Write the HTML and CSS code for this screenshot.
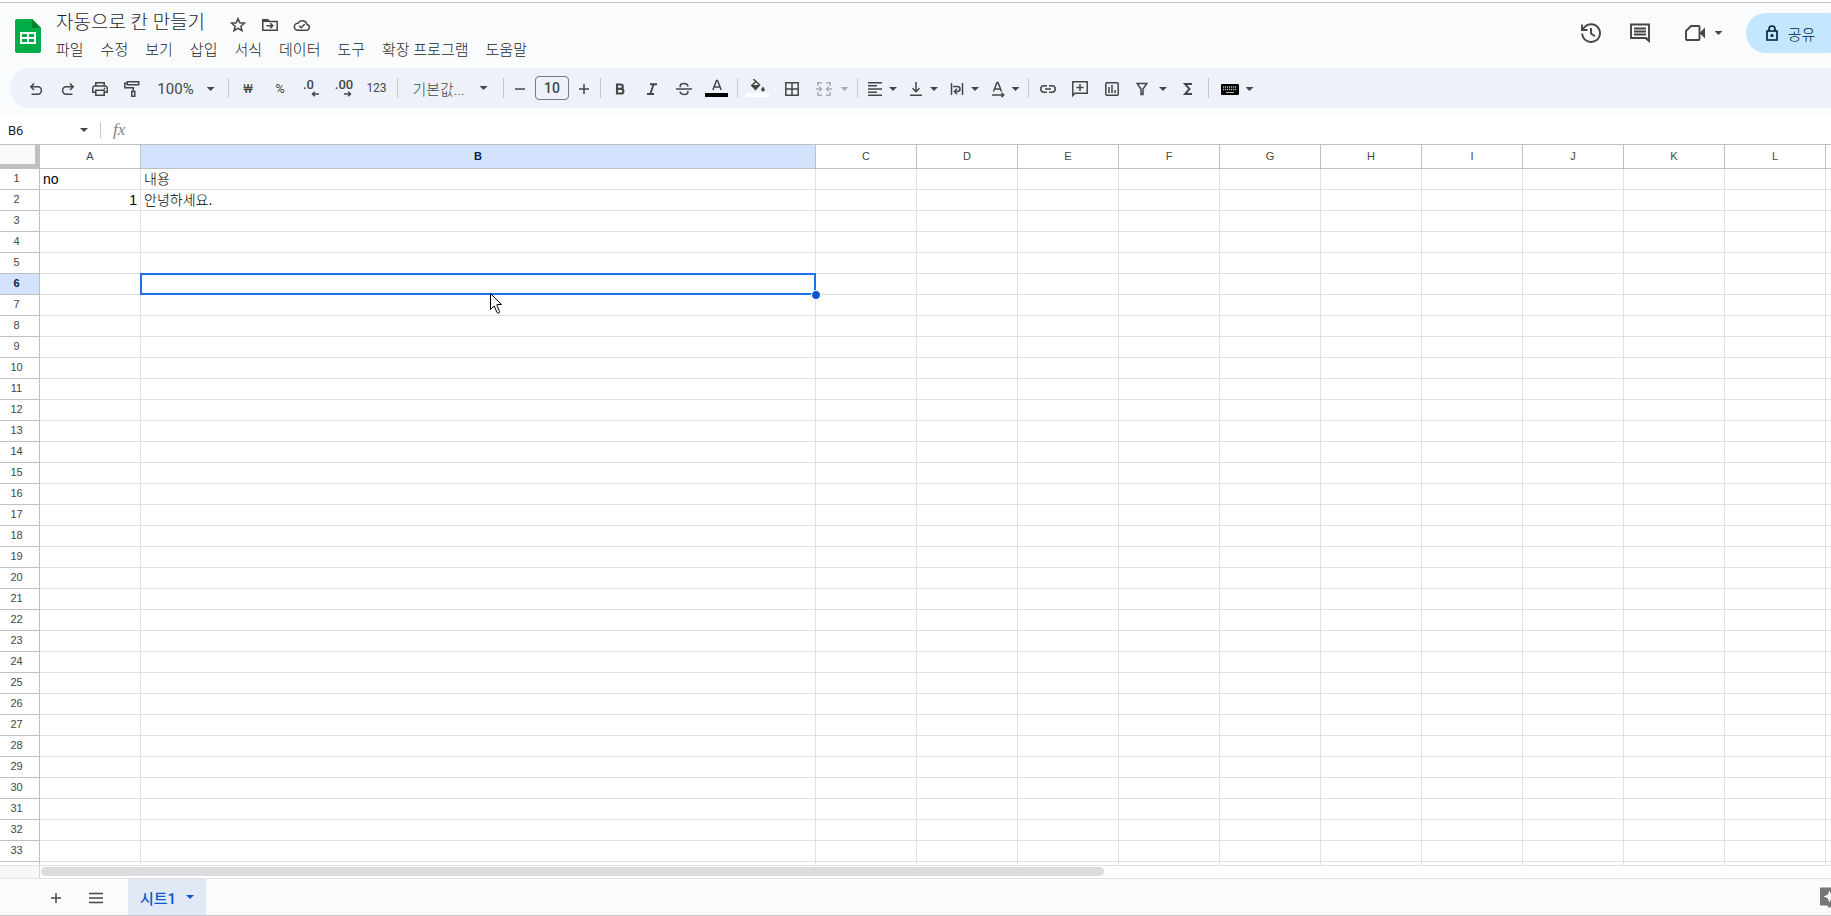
FILE: index.html
```html
<!DOCTYPE html>
<html lang="ko">
<head>
<meta charset="utf-8">
<title>자동으로 칸 만들기</title>
<link rel="stylesheet" href="styles.css">
</head>
<body>
<header class="header">
  <svg class="logo" viewBox="0 0 26 34" aria-hidden="true">
    <path fill="#00ac47" d="M2 0h15l9 9v23a2 2 0 0 1-2 2H2a2 2 0 0 1-2-2V2a2 2 0 0 1 2-2z"/>
    <path fill="#00832d" d="M17 0l9 9h-9z"/>
    <path fill="#fff" fill-rule="evenodd" d="M5 13h16v12H5zM7 15v3h5v-3zM14 15v3h5v-3zM7 20v3h5v-3zM14 20v3h5v-3z"/>
  </svg>
  <div class="doc">
    <div class="title-row">
      <h1 class="title">자동으로 칸 만들기</h1>
      <button class="doc-btn" aria-label="별표"><svg viewBox="0 0 18 18"><path class="s" d="M9 2.6l1.8 4.2 4.6.4-3.5 3 1.1 4.5L9 12.3l-4 2.4 1.1-4.5-3.5-3 4.6-.4z"/></svg></button>
      <button class="doc-btn" aria-label="이동"><svg viewBox="0 0 18 18"><path class="s" d="M1.8 14.2V3.8h5l1.6 1.7h7.8v8.7z"/><path class="f" d="M1.5 3.5h5l2 2.5h-7z"/><path class="s" d="M5.5 9.8h6M9.3 7.3l2.5 2.5-2.5 2.5"/></svg></button>
      <button class="doc-btn" aria-label="문서 상태"><svg viewBox="0 0 18 18"><path class="s" d="M4.8 14.3h9a2.9 2.9 0 0 0 .3-5.700A5 5 0 0 0 4.900 7.300a3.500 3.500 0 0 0-.1 7z"/><path class="s" d="M6.200 9.800l2 2 3.600-3.700"/></svg></button>
    </div>
    <nav class="menus">
      <button>파일</button><button>수정</button><button>보기</button><button>삽입</button><button>서식</button><button>데이터</button><button>도구</button><button>확장 프로그램</button><button>도움말</button>
    </nav>
  </div>
  <div class="actions">
    <button class="history" aria-label="기록"><svg viewBox="0 0 20 20"><path class="s2" d="M1.200 10.500a8.900 8.900 0 1 0 1.800-5.800L1.500 6.500M1 1.500v5.500h5.500"/><path class="s2" d="M10 5v5.600l4 2.600"/></svg></button>
    <button class="comments" aria-label="댓글"><svg viewBox="0 0 20 20"><path class="s2" d="M1 1.500h18v16l-3-2.500H1z"/><path class="f" d="M14 15h6v5z"/><path class="s2" d="M4 5.500h12M4 8.500h12M4 11.500h12"/></svg></button>
    <button class="meet" aria-label="화상 회의"><svg viewBox="0 0 20 20"><path class="s2" d="M6 3h7.500a1 1 0 0 1 1 1v12a1 1 0 0 1-1 1H2a1 1 0 0 1-1-1V8z"/><path class="f" d="M15 9.500L20 4.500v11l-5-5z"/></svg><i class="caret"></i></button>
    <button class="share"><svg viewBox="0 0 12 16"><path d="M1 6h10v9H1zM3 6V4a3 3 0 0 1 6 0v2" fill="none" stroke="#001d35" stroke-width="1.600"/><circle cx="6" cy="10.500" r="1.500" fill="#001d35"/></svg>공유</button>
  </div>
</header>

<div class="toolbar-wrap">
<div class="toolbar" role="toolbar">
  <button class="tool" aria-label="실행취소"><svg viewBox="0 0 18 18"><path class="s" d="M4.500 14.200h6.200a3.700 3.700 0 0 0 0-7.400H4M7 3.600L3.800 6.800 7 10"/></svg></button>
  <button class="tool" aria-label="재실행"><svg viewBox="0 0 18 18"><path class="s" d="M13.500 14.200H7.300a3.700 3.700 0 0 1 0-7.400H14M11 3.600l3.200 3.200L11 10"/></svg></button>
  <button class="tool" aria-label="인쇄"><svg viewBox="0 0 18 18"><path class="s" d="M4.800 5.500V2.800h8.400v2.700M4.500 12.300H1.800V8a2 2 0 0 1 2-2h10.400a2 2 0 0 1 2 2v4.300h-2.700M4.800 10.300h8.400v5H4.800z"/><circle class="f" cx="13.500" cy="8.300" r=".9"/></svg></button>
  <button class="tool" aria-label="서식 복사"><svg viewBox="0 0 18 18"><path class="s" d="M4.300 1.800h11.400v3H4.300zM4 3.300H1.800v4.500h8.500v3M8.800 11.500h3v4.700h-3z"/></svg></button>
  <button class="tool zoom">100%<i class="caret"></i></button>
  <span class="sep"></span>
  <button class="tool small">₩</button>
  <button class="tool small">%</button>
  <button class="tool dec less" aria-label="소수점 이하 자릿수 감소"><span>.0</span><svg viewBox="0 0 8 6"><path d="M8 3H1.500M3.800.7L1.500 3l2.300 2.300" fill="none" stroke="#444746" stroke-width="1.500"/></svg></button>
  <button class="tool dec" aria-label="소수점 이하 자릿수 증가"><span>.00</span><svg viewBox="0 0 8 6"><path d="M0 3h6.500M4.200.7L6.500 3 4.200 5.300" fill="none" stroke="#444746" stroke-width="1.500"/></svg></button>
  <button class="tool small num">123</button>
  <span class="sep"></span>
  <button class="tool font">기본값...<i class="caret"></i></button>
  <span class="sep"></span>
  <button class="tool step" aria-label="글꼴 크기 줄이기"><svg viewBox="0 0 18 18"><path class="s" d="M4 9h10"/></svg></button>
  <input class="size" aria-label="글꼴 크기" value="10">
  <button class="tool step plus" aria-label="글꼴 크기 늘리기"><svg viewBox="0 0 18 18"><path class="s" d="M4 9h10M9 4v10"/></svg></button>
  <span class="sep"></span>
  <button class="tool" aria-label="굵게"><svg viewBox="0 0 18 18"><path d="M6 4.500h3.600a2.200 2.200 0 0 1 0 4.400H6zM6 8.900h4.100a2.300 2.300 0 0 1 0 4.600H6z" fill="none" stroke="#444746" stroke-width="2.100"/></svg></button>
  <button class="tool" aria-label="기울임꼴"><svg viewBox="0 0 18 18"><path class="s2" d="M7 4.200h7M4 14h7M10.700 4L7.300 14"/></svg></button>
  <button class="tool" aria-label="취소선"><svg viewBox="0 0 18 18"><path class="s" d="M1 9h16M13 6.300C12.700 4.300 11 3.600 9 3.600c-2.300 0-3.800 1-3.800 2.500 0 .5.100.8.400 1.200M5 11.700c.3 1.900 2 2.700 4 2.700 2.300 0 3.900-.9 3.900-2.500 0-.4-.1-.7-.3-1"/></svg></button>
  <button class="tool wide color" aria-label="텍스트 색상"><svg viewBox="0 0 18 13"><path class="s" d="M4.800 11L8.500 1.500h1L13.200 11M6 8h6"/></svg><i class="swatch black"></i></button>
  <span class="sep"></span>
  <button class="tool wide color" aria-label="채우기 색상"><svg viewBox="0 0 18 13"><path class="s" d="M4.500 0l6 6-4 4.200L2.700 6.500 7 2.500"/><path class="f" d="M2.300 6h8.700L6.500 11.500zM14 7.500c1 1.300 1.800 2.200 1.800 3.200a1.800 1.800 0 0 1-3.600 0c0-1 .8-1.900 1.800-3.200z"/></svg><i class="swatch white"></i></button>
  <button class="tool borders" aria-label="테두리"><svg viewBox="0 0 18 18"><path class="s" d="M2.800 2.800h12.400v12.400H2.800zM9 3v12M3 9h12"/></svg></button>
  <button class="tool split off" aria-label="셀 병합"><svg viewBox="0 0 18 18"><path class="s" d="M7 2.800H2.800V6M11 2.800h4.200V6M7 15.200H2.800V12M11 15.200h4.200V12M1 9h5M4.300 6.800L6.500 9l-2.200 2.200M17 9h-5M13.700 6.800L11.500 9l2.200 2.200"/></svg><i class="caret"></i></button>
  <span class="sep"></span>
  <button class="tool split" aria-label="가로 맞춤"><svg viewBox="0 0 18 18"><path class="s" d="M2 2.700h14M2 5.850h9M2 9h14M2 12.150h9M2 15.300h14"/></svg><i class="caret"></i></button>
  <button class="tool split" aria-label="세로 맞춤"><svg viewBox="0 0 18 18"><path class="s" d="M3 15.300h12M9 2v9.500M5.500 8.300L9 11.800l3.500-3.500"/></svg><i class="caret"></i></button>
  <button class="tool split" aria-label="텍스트 줄바꿈"><svg viewBox="0 0 18 18"><path class="s" d="M3.500 3v12M14.500 3v12M5 6.500h4.500a2.400 2.400 0 0 1 0 5H7M9 8.800l-2.700 2.700L9 14.200"/></svg><i class="caret"></i></button>
  <button class="tool split rotate" aria-label="텍스트 회전"><svg viewBox="0 0 18 18"><path class="s" d="M4.500 11.500L8 2.500h1l3.500 9M5.700 9h5.600M3 15h11M12.500 12.800l2.200 2.200-2.200 2.200"/></svg><i class="caret"></i></button>
  <span class="sep"></span>
  <button class="tool" aria-label="링크 삽입"><svg viewBox="0 0 18 18"><path class="s" d="M8 5.800H5a3.200 3.200 0 0 0 0 6.400h3M10 5.800h3a3.200 3.200 0 0 1 0 6.400h-3M6 9h6"/></svg></button>
  <button class="tool" aria-label="댓글 삽입"><svg viewBox="0 0 18 18"><path class="s" d="M1.800 15.500V1.800h14.400v11.400H4z"/><path class="s" d="M9 4v7M5.500 7.500h7"/></svg></button>
  <button class="tool" aria-label="차트 삽입"><svg viewBox="0 0 18 18"><rect class="s" x="2.800" y="2.800" width="12.400" height="12.400" rx="1"/><path class="s" d="M6 7v6M9 5v8M12 10v3"/></svg></button>
  <button class="tool split filter" aria-label="필터 만들기"><svg viewBox="0 0 18 18"><path class="s" d="M4.200 3.500h9.600L10 9v5.500H8V9z"/></svg><i class="caret"></i></button>
  <button class="tool" aria-label="함수"><svg viewBox="0 0 18 18"><path class="s2" d="M13 4H6l4.500 5L6 14h7"/></svg></button>
  <span class="sep"></span>
  <button class="tool split keys" aria-label="입력 도구"><svg viewBox="0 0 18 18"><rect x="0" y="4" width="18" height="11" rx="1" fill="#000"/><path d="M2 7h14M2 9.500h14" stroke="#bbb" stroke-width="1.300" stroke-dasharray="1.200 .8"/><path d="M5 12.500h8" stroke="#bbb"/></svg><i class="caret"></i></button>
</div>
</div>

<div class="formula">
  <button class="namebox">B6<i class="caret"></i></button>
  <label class="fx" for="fx">fx</label>
  <input id="fx" class="fx-input">
</div>

<main class="grid">
  <table class="sheet">
    <colgroup><col class="c-row"><col class="c-std"><col class="c-b"><col class="c-std" span="11"></colgroup>
    <thead><tr id="cols"><th class="corner"></th></tr></thead>
    <tbody id="rows"></tbody>
  </table>
</main>
<div class="scroll"><span class="scroll-head"></span><span class="scroll-track"><span class="thumb"></span></span></div>

<footer class="tabs">
  <button class="foot-btn" aria-label="시트 추가"><svg viewBox="0 0 18 18"><path class="s" d="M4 9h10M9 4v10"/></svg></button>
  <button class="foot-btn list" aria-label="모든 시트"><svg viewBox="0 0 18 18"><path class="s" d="M2 4.500h14M2 9h14M2 13.500h14"/></svg></button>
  <button class="tab">시트1<i class="caret"></i></button>
  <button class="explore" aria-label="탐색"><svg viewBox="0 0 20 20"><path fill="#747775" d="M1 0h18a1 1 0 0 1 1 1v16a1 1 0 0 1-1 1h-7l-2.500 2.500L7 18H1a1 1 0 0 1-1-1V1a1 1 0 0 1 1-1z"/><path fill="#fff" d="M9.500 3l1.700 4.300L15.500 9l-4.300 1.700L9.500 15l-1.700-4.300L3.500 9l4.300-1.700z"/></svg></button>
</footer>
<template id="pointer"><span class="handle"></span><svg class="pointer" viewBox="0 0 12 21"><path d="M.5.500v16l3.700-3.500L7 19.500l1 .8 1.500-.8v-1L7 12.500V11.500h4.500z" fill="#fff" stroke="#000"/></svg></template>
<script src="sheet.js"></script>
</body>
</html>
```

FILE: styles.css
```css
* { box-sizing: border-box; }
body {
  margin: 0;
  height: 100vh;
  display: flex;
  flex-direction: column;
  overflow: hidden;
  background: #fff;
  color: #1f1f1f;
  font-family: Roboto, "Noto Sans CJK KR", sans-serif;
  border-top: 2px solid #fff;
}
button, input {
  font: inherit;
  color: inherit;
  background: none;
  border: 0;
  padding: 0;
  margin: 0;
}
button { display: flex; align-items: center; justify-content: center; flex: none; white-space: nowrap; }
svg { display: block; flex: none; width: 18px; height: 18px; }
.s { fill: none; stroke: #444746; stroke-width: 1.5; }
.s2 { fill: none; stroke: #444746; stroke-width: 1.9; }
.f { fill: #444746; }
.caret {
  flex: none;
  width: 8px;
  height: 4px;
  background: #444746;
  clip-path: polygon(0 0, 100% 0, 50% 100%);
}

/* Header */
.header {
  flex: none;
  display: flex;
  height: 66px;
  padding-left: 15px;
  background: #f9fbfd;
  border-top: 1px solid #c7c7c7;
}
.logo { width: 26px; height: 34px; margin-top: 16px; }
.doc { margin-left: 15px; padding-top: 7px; }
.title-row { display: flex; align-items: center; height: 26px; }
.title { margin: 0 17px 0 0; font-size: 19px; line-height: 24px; font-weight: 300; white-space: nowrap; }
.doc-btn { width: 32px; height: 24px; padding-top: 4px; }
.menus { display: flex; gap: 17px; font-size: 15px; line-height: 24px; font-weight: 300; padding-top: 2px; }
.actions { display: flex; margin: 10px -17px 0 auto; height: 40px; }
.actions svg { width: 20px; height: 20px; }
.history, .comments { width: 49px; }
.meet { width: 82px; gap: 10px; padding-right: 3px; }
.share {
  width: 102px;
  gap: 10px;
  padding-right: 13px;
  border-radius: 20px;
  background: #c2e7ff;
  color: #001d35;
  font-size: 15px;
  font-weight: 300;
}
.share svg { width: 12px; height: 16px; }

/* Toolbar */
.toolbar-wrap { flex: none; height: 48px; padding-left: 10px; background: #f9fbfd; }
.toolbar {
  display: flex;
  align-items: center;
  height: 40px;
  padding-left: 10px;
  border-radius: 20px 0 0 20px;
  background: #edf2fa;
  color: #444746;
}
.tool { width: 32px; height: 28px; padding-top: 2px; }
.wide { width: 33px; }
.borders { width: 36px; }
.sep { flex: none; width: 1px; height: 20px; margin: 0 3px 0 4px; background: #c7c7c7; }
.zoom { width: 76px; gap: 13px; font-size: 15px; }
.small { font-size: 13px; padding: 0; }
.num { width: 33px; font-size: 12px; }
.dec { flex-direction: column; align-items: center; font-size: 13px; line-height: 12px; font-weight: 500; padding: 0; }
.dec svg { width: 8px; height: 6px; margin-left: 8px; }
.less { align-items: flex-start; padding-left: 7px; }
.font { width: 98px; gap: 15px; padding: 0; font-size: 15px; font-weight: 300; }
.step { width: 26px; }
.plus { width: 25px; }
.size {
  width: 34px;
  height: 24px;
  margin: 0 2px;
  border: 1px solid #747775;
  border-radius: 4px;
  text-align: center;
  font-size: 14px;
  font-weight: 500;
}
.color { flex-direction: column; gap: 1px; padding: 0; }
.color svg { height: 13px; }
.swatch { width: 23px; height: 4px; }
.black { background: #000; }
.white { background: #fff; }
.split { width: 41px; gap: 5px; }
.off { width: 43px; gap: 8px; opacity: .4; }
.filter { width: 44px; gap: 8px; }
.rotate { width: 40px; }
.keys { width: 50px; gap: 7px; }

/* Formula bar */
.formula {
  flex: none;
  display: flex;
  align-items: center;
  height: 29px;
  border-bottom: 1px solid #c0c0c0;
}
.namebox {
  width: 101px;
  height: 16px;
  justify-content: space-between;
  padding: 0 12px 0 8px;
  border-right: 1px solid #c7c7c7;
  font-size: 13px;
}
.fx { margin-left: 12px; width: 24px; font: italic 17px "Liberation Serif", serif; color: #80868b; }
.fx-input { flex: 1; min-width: 0; height: 24px; outline: 0; }

/* Grid */
.grid { flex: 1; min-height: 0; overflow: hidden; }
.sheet {
  width: 1927px;
  table-layout: fixed;
  border-collapse: separate;
  border-spacing: 0;
  font-family: "Liberation Sans", "Noto Sans CJK KR", sans-serif;
}
.c-row { width: 40px; }
.c-std { width: 101px; }
.c-b { width: 675px; }
.sheet th {
  padding: 0 0 2px;
  border: 0 solid #c0c0c0;
  border-width: 0 1px 1px 0;
  font-size: 11px;
  line-height: 12px;
  font-weight: 400;
  color: #444746;
}
.sheet thead th { height: 24px; }
.sheet tbody th { height: 21px; padding-right: 6px; }
.sheet .corner { border-width: 0 5px 5px 0; background: #f8f9fa; }
.sheet .active { background: #d3e3fd; color: #041e49; font-weight: 700; }
.sheet td {
  position: relative;
  height: 21px;
  padding: 0 3px;
  border: 0 solid #e1e1e1;
  border-width: 0 1px 1px 0;
  font-size: 14px;
  line-height: 18px;
  font-weight: 300;
  color: #000;
}
.sheet .number { text-align: right; }
.sheet .selected::after {
  content: "";
  position: absolute;
  inset: -1px;
  border: 2px solid #1a73e8;
}
.handle {
  position: absolute;
  z-index: 1;
  right: -6px;
  bottom: -6px;
  width: 10px;
  height: 10px;
  border: 1px solid #fff;
  border-radius: 50%;
  background: #0b57d0;
}
.pointer { position: absolute; z-index: 1; left: 349px; top: 19px; width: 12px; height: 21px; }

/* Horizontal scrollbar */
.scroll { flex: none; display: flex; height: 13px; border-top: 1px solid #e1e1e1; }
.scroll-head { width: 40px; background: #f8f8f8; border-right: 1px solid #d5d5d5; }
.scroll-track { flex: 1; padding: 1px; }
.thumb { display: block; width: 59.4%; height: 9px; border-radius: 5px; background: #dadce0; }

/* Sheet tabs */
.tabs {
  flex: none;
  display: flex;
  height: 38px;
  padding-left: 40px;
  background: #f9fbfd;
  border: 0 solid #e1e3e1;
  border-width: 1px 0;
  border-bottom-color: #c7c7c7;
}
.foot-btn { width: 32px; padding-top: 2px; }
.list { width: 48px; }
.tab {
  width: 78px;
  margin-left: 8px;
  gap: 10px;
  background: #e1e9f7;
  color: #0b57d0;
  font-size: 15px;
  font-weight: 500;
}
.tab .caret { background: #0b57d0; }
.explore { margin: 0 -9px 0 auto; }
.explore svg { width: 20px; height: 21px; }
```

FILE: sheet.js
```js
const columns = [..."ABCDEFGHIJKL", ""];
const values = { A1: "no", B1: "내용", A2: "1", B2: "안녕하세요." };
const active = { column: "B", row: 6 };

const head = document.getElementById("cols");
for (const name of columns) {
  const th = document.createElement("th");
  th.textContent = name;
  if (name === active.column) th.className = "active";
  head.append(th);
}

const body = document.getElementById("rows");
for (let n = 1; n <= 34; n++) {
  const tr = document.createElement("tr");
  const th = document.createElement("th");
  th.textContent = n < 34 ? n : "";
  if (n === active.row) th.className = "active";
  tr.append(th);
  for (const name of columns) {
    const td = document.createElement("td");
    const value = values[name + n] || "";
    td.textContent = value;
    if (/^\d+$/.test(value)) td.className = "number";
    if (name === active.column && n === active.row) {
      td.className = "selected";
      td.append(document.getElementById("pointer").content.cloneNode(true));
    }
    tr.append(td);
  }
  body.append(tr);
}
```
